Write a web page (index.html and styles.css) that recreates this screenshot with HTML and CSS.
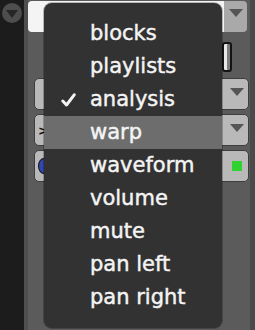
FILE: index.html
```html
<!DOCTYPE html>
<html lang="en">
    <head>
        <meta charset="utf-8">
        <link rel="stylesheet" href="styles.css">
    </head>
    <body>
    <div class="app">
        <div class="side">
            <span class="round-btn">
                <svg width="12" height="8" viewBox="0 0 12 8"><path d="M0 0H12L6 8Z" fill="#262626"/></svg>
            </span>
        </div>
        <div class="panel">
            <div class="top">
                <div class="field"></div>
                <div class="drop">
                    <svg width="14" height="8" viewBox="0 0 14 8"><path d="M0 0H14L7 8Z" fill="#555"/></svg>
                </div>
            </div>
            <div class="line">
                <span class="toggle"></span>
            </div>
            <div class="sel">
                <span class="sel-body"></span>
                <span class="sel-arrow"><svg width="14" height="8" viewBox="0 0 14 8"><path d="M0 0H14L7 8Z" fill="#555"/></svg></span>
            </div>
            <div class="sel">
                <span class="sel-body"><span class="chev">&gt;</span></span>
                <span class="sel-arrow"><svg width="14" height="8" viewBox="0 0 14 8"><path d="M0 0H14L7 8Z" fill="#555"/></svg></span>
            </div>
            <div class="sel">
                <span class="sel-body"><span class="dot"></span></span>
                <span class="sel-arrow"><span class="led"></span></span>
            </div>
        </div>
        <div class="edge"></div>
    </div>
    <ul class="menu">
        <li>blocks</li>
        <li>playlists</li>
        <li><svg class="check" width="15" height="14" viewBox="0 0 15 14"><path d="M1.8 8L5.5 12L13.2 1.8" fill="none" stroke="#f4f4f4" stroke-width="3" stroke-linecap="round" stroke-linejoin="round"/></svg>analysis</li>
        <li class="hover">warp</li>
        <li>waveform</li>
        <li>volume</li>
        <li>mute</li>
        <li>pan left</li>
        <li>pan right</li>
    </ul>
    </body>
</html>
```

FILE: styles.css
```css
html, body{
    margin:0;
    padding:0;
}
body{
    width:255px;
    height:330px;
    overflow:hidden;
    background:#1c1c1c;
    font-family:"DejaVu Sans", sans-serif;
    position:relative;
}
.app{
    display:flex;
    height:330px;
}
.side{
    width:24px;
    background:#1c1c1c;
    padding-top:3px;
}
.round-btn{
    display:flex;
    align-items:center;
    justify-content:center;
    width:20px;
    height:20px;
    margin-left:2px;
    border-radius:50%;
    background:#4e4e4e;
}
.round-btn svg{
    margin-top:2px;
}
.panel{
    flex:1;
    background:#5b5b5b;
    border-left:4px solid #4f4f4f;
    padding-top:1px;
}
.edge{
    width:5px;
    background:#4a4a4a;
}
.top{
    display:flex;
    height:31px;
    margin-right:3px;
}
.field{
    flex:1;
    background:#f4f4f4;
    border-radius:4px 0 0 4px;
}
.drop{
    width:23px;
    background:#a9a9a9;
    border-radius:0 4px 4px 0;
    display:flex;
    justify-content:center;
    padding-top:8px;
    box-sizing:border-box;
}
.line{
    height:46px;
    display:flex;
    justify-content:flex-end;
    padding-right:18px;
    padding-top:10px;
    box-sizing:border-box;
}
.toggle{
    width:10px;
    height:30px;
    box-sizing:border-box;
    border:2px solid #141414;
    border-radius:3px;
    background:#7d7d7d;
    box-shadow:inset 3px 0 0 #e8e8e8;
}
.sel{
    display:flex;
    height:32px;
    margin:0 1px 4px 6px;
    border:1px solid #3e3e3e;
    border-radius:5px;
    background:#b9b9b9;
    box-sizing:border-box;
    overflow:hidden;
}
.sel-body{
    flex:1;
    display:flex;
    align-items:center;
    padding-left:3px;
}
.sel-arrow{
    width:22px;
    display:flex;
    align-items:center;
    justify-content:center;
    padding-bottom:4px;
    box-sizing:border-box;
}
.chev{
    font:bold 13px "DejaVu Sans", sans-serif;
    color:#111;
}
.dot{
    width:10px;
    height:14px;
    border-radius:50%;
    background:#3247a8;
    border:1px solid #111;
}
.led{
    width:10px;
    height:10px;
    background:#2fd22f;
    margin-top:4px;
}
.menu{
    position:absolute;
    left:44px;
    top:3px;
    width:178px;
    height:325px;
    box-sizing:border-box;
    margin:0;
    padding:14px 0;
    list-style:none;
    background:#323232;
    border-radius:8px;
    box-shadow:0 0 0 1px rgba(0,0,0,0.25);
}
.menu li{
    position:relative;
    height:33px;
    line-height:33px;
    padding-left:46px;
    font-size:21px;
    color:#f4f4f4;
    -webkit-text-stroke:0.45px #f4f4f4;
}
.menu li.hover{
    background:#6d6d6d;
}
.check{
    position:absolute;
    left:17px;
    top:10px;
}
```
